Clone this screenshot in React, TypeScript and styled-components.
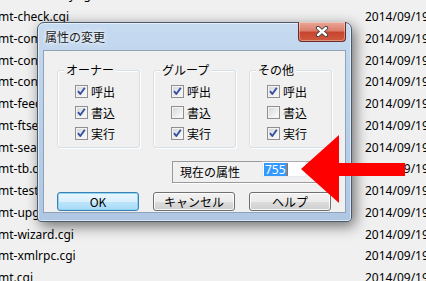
import * as React from "react";
import styled, { createGlobalStyle } from "styled-components";

const UI_FONT = `"Noto Sans CJK JP", "Noto Sans", sans-serif`;

const GlobalStyle = createGlobalStyle`
  html, body {
    margin: 0;
    padding: 0;
    background: #f0f0f0;
  }
  body {
    overflow: hidden;
  }
`;

const Screen = styled.div`
  position: relative;
  width: 426px;
  height: 281px;
  overflow: hidden;
  background: #f0f0f0;
`;

const FileList = styled.div`
  display: grid;
  grid-template-columns: 367px 1fr;
  grid-auto-rows: 21.75px;
  align-items: center;
  margin: -16px 0 0 -2px;
  font: 12px "Noto Sans", sans-serif;
  color: #000;
  white-space: nowrap;
`;

const FileCell = styled.div`
  overflow: hidden;
`;

const Dialog = styled.div`
  position: absolute;
  left: 37px;
  top: 22px;
  width: 315px;
  height: 200px;
  box-sizing: border-box;
  display: flex;
  flex-direction: column;
  padding: 0 5px 8px;
  border: 1px solid #4a5c70;
  border-radius: 7px 7px 4px 4px;
  background: linear-gradient(180deg, #c6daf0 0%, #bcd2eb 35%, #afc7e3 100%);
  box-shadow: inset 0 0 0 1px rgba(255, 255, 255, 0.55),
    3px 4px 14px rgba(0, 0, 0, 0.55);
  font-family: ${UI_FONT};
  font-size: 12px;
  color: #000;
`;

const TitleBar = styled.div`
  height: 27px;
  display: flex;
  align-items: center;
  padding-left: 2px;
`;

const Title = styled.div`
  flex: 1;
  color: #1a1a1a;
  text-shadow: 0 0 6px #fff, 0 0 3px #fff;
`;

const CloseButton = styled.div`
  align-self: flex-start;
  margin-top: -1px;
  width: 48px;
  height: 20px;
  box-sizing: border-box;
  display: flex;
  align-items: center;
  justify-content: center;
  border: 1px solid #6e2a24;
  border-top: none;
  border-radius: 0 0 4px 4px;
  background: linear-gradient(
    180deg,
    #e9a898 0%,
    #dc7f6d 45%,
    #c7452f 55%,
    #cf5a3f 100%
  );
  box-shadow: inset 0 0 0 1px rgba(255, 255, 255, 0.35);
`;

const Client = styled.div`
  flex: 1;
  border: 1px solid #8ea3b9;
  background: #f0f0f0;
  display: grid;
  grid-template-columns: repeat(3, 83px);
  grid-template-rows: auto auto auto;
  column-gap: 13px;
  align-content: start;
  padding: 19px 0 0 13px;
`;

const GroupBox = styled.div`
  position: relative;
  display: flex;
  flex-direction: column;
  padding: 10px 0 3px 17px;
  border: 1px solid #d5dfe5;
  border-radius: 3px;
  box-shadow: inset 1px 1px 0 #fff, 1px 1px 0 #fff;
`;

const GroupCaption = styled.span`
  position: absolute;
  top: -8px;
  left: 6px;
  padding: 0 2px;
  line-height: 14px;
  background: #f0f0f0;
`;

const CheckRow = styled.label`
  height: 21px;
  display: flex;
  align-items: center;
  gap: 3px;
`;

const Box = styled.span`
  width: 13px;
  height: 13px;
  box-sizing: border-box;
  border: 1px solid #8f8f8f;
  background: linear-gradient(135deg, #d2d4d8 0%, #f2f2f2 70%, #fbfbfb 100%);
  box-shadow: inset 0 0 0 1px #f4f4f4;
  display: flex;
`;

const AttrBox = styled.div`
  grid-column: 2 / 4;
  margin: 13px 0 0 19px;
  height: 22px;
  box-sizing: border-box;
  display: flex;
  border: 1px solid #9a9a9a;
  box-shadow: 1px 1px 0 #fff;
`;

const AttrLabel = styled.div`
  width: 89px;
  box-sizing: border-box;
  padding-left: 7px;
  line-height: 20px;
`;

const Edit = styled.div`
  align-self: flex-start;
  margin-top: -1px;
  width: 44px;
  height: 16px;
  box-sizing: border-box;
  display: flex;
  align-items: center;
  padding-left: 1px;
  border: 1px solid #e3e9ef;
  border-top-color: #abadb3;
  background: #fff;
`;

const Selected = styled.span`
  background: #3399ff;
  color: #fff;
  line-height: 13px;
  padding: 0 1px;
  font-family: "Noto Sans", sans-serif;
`;

const Caret = styled.span`
  width: 1px;
  height: 13px;
  background: #c8650f;
`;

const Button = styled.div<{ $default?: boolean }>`
  margin-top: 9px;
  width: 82px;
  height: 19px;
  box-sizing: border-box;
  display: flex;
  align-items: center;
  justify-content: center;
  border: 1px solid ${({ $default }) => ($default ? "#3c7fb1" : "#707070")};
  border-radius: 3px;
  background: ${({ $default }) =>
    $default
      ? "linear-gradient(180deg, #eaf6fd 0%, #d9f0fc 50%, #bee6fd 50%, #a7d9f5 100%)"
      : "linear-gradient(180deg, #f2f2f2 0%, #ebebeb 50%, #dddddd 50%, #cfcfcf 100%)"};
  box-shadow: inset 0 0 0 1px
    ${({ $default }) => ($default ? "#8fd5f5" : "rgba(255, 255, 255, 0.8)")};
`;

const ArrowLayer = styled.svg`
  position: absolute;
  left: 0;
  top: 0;
`;

const files: [string, string][] = [
  ["mt-add-notify.cgi", "2014/09/19"],
  ["mt-check.cgi", "2014/09/19"],
  ["mt-comments.cgi", "2014/09/19"],
  ["mt-config.cgi", "2014/09/19"],
  ["mt-contactform.cgi", "2014/09/19"],
  ["mt-feed.cgi", "2014/09/19"],
  ["mt-ftsearch.cgi", "2014/09/19"],
  ["mt-search.cgi", "2014/09/19"],
  ["mt-tb.cgi", "2014/09/19"],
  ["mt-testbg.cgi", "2014/09/19"],
  ["mt-upgrade.cgi", "2014/09/19"],
  ["mt-wizard.cgi", "2014/09/19"],
  ["mt-xmlrpc.cgi", "2014/09/19"],
  ["mt.cgi", "2014/09/19"],
];

const groups = [
  { title: "オーナー", checks: [true, true, true] },
  { title: "グループ", checks: [true, false, true] },
  { title: "その他", checks: [true, false, true] },
];

const labels = ["呼出", "書込", "実行"];

function Check({ checked }: { checked: boolean }) {
  return (
    <Box>
      {checked && (
        <svg width="11" height="11" viewBox="0 0 11 11">
          <path
            d="M2 5.2 L4.3 8 L8.8 1.8"
            fill="none"
            stroke="#3350a0"
            strokeWidth="1.9"
            strokeLinejoin="round"
          />
        </svg>
      )}
    </Box>
  );
}

export default function App() {
  return (
    <Screen>
      <GlobalStyle />
      <FileList>
        {files.map(([name, date]) => (
          <React.Fragment key={name}>
            <FileCell>{name}</FileCell>
            <FileCell>{date}</FileCell>
          </React.Fragment>
        ))}
      </FileList>

      <Dialog>
        <TitleBar>
          <Title>属性の変更</Title>
          <CloseButton>
            <svg width="14" height="11" viewBox="0 0 14 11">
              <path
                d="M3 2 L11 9 M11 2 L3 9"
                stroke="#3d3d3d"
                strokeWidth="4.2"
                strokeLinecap="round"
              />
              <path
                d="M3 2 L11 9 M11 2 L3 9"
                stroke="#fff"
                strokeWidth="2.4"
                strokeLinecap="round"
              />
            </svg>
          </CloseButton>
        </TitleBar>
        <Client>
          {groups.map((g) => (
            <GroupBox key={g.title}>
              <GroupCaption>{g.title}</GroupCaption>
              {g.checks.map((c, i) => (
                <CheckRow key={labels[i]}>
                  <Check checked={c} />
                  {labels[i]}
                </CheckRow>
              ))}
            </GroupBox>
          ))}
          <AttrBox>
            <AttrLabel>現在の属性</AttrLabel>
            <Edit>
              <Selected>755</Selected>
              <Caret />
            </Edit>
          </AttrBox>
          <Button $default style={{ gridColumn: 1 }}>
            OK
          </Button>
          <Button>キャンセル</Button>
          <Button>ヘルプ</Button>
        </Client>
      </Dialog>

      <ArrowLayer width="426" height="281" viewBox="0 0 426 281">
        <polygon
          points="301,169 339,135 339,163 405,163 405,176 339,176 339,203"
          fill="#ff0000"
        />
      </ArrowLayer>
    </Screen>
  );
}
